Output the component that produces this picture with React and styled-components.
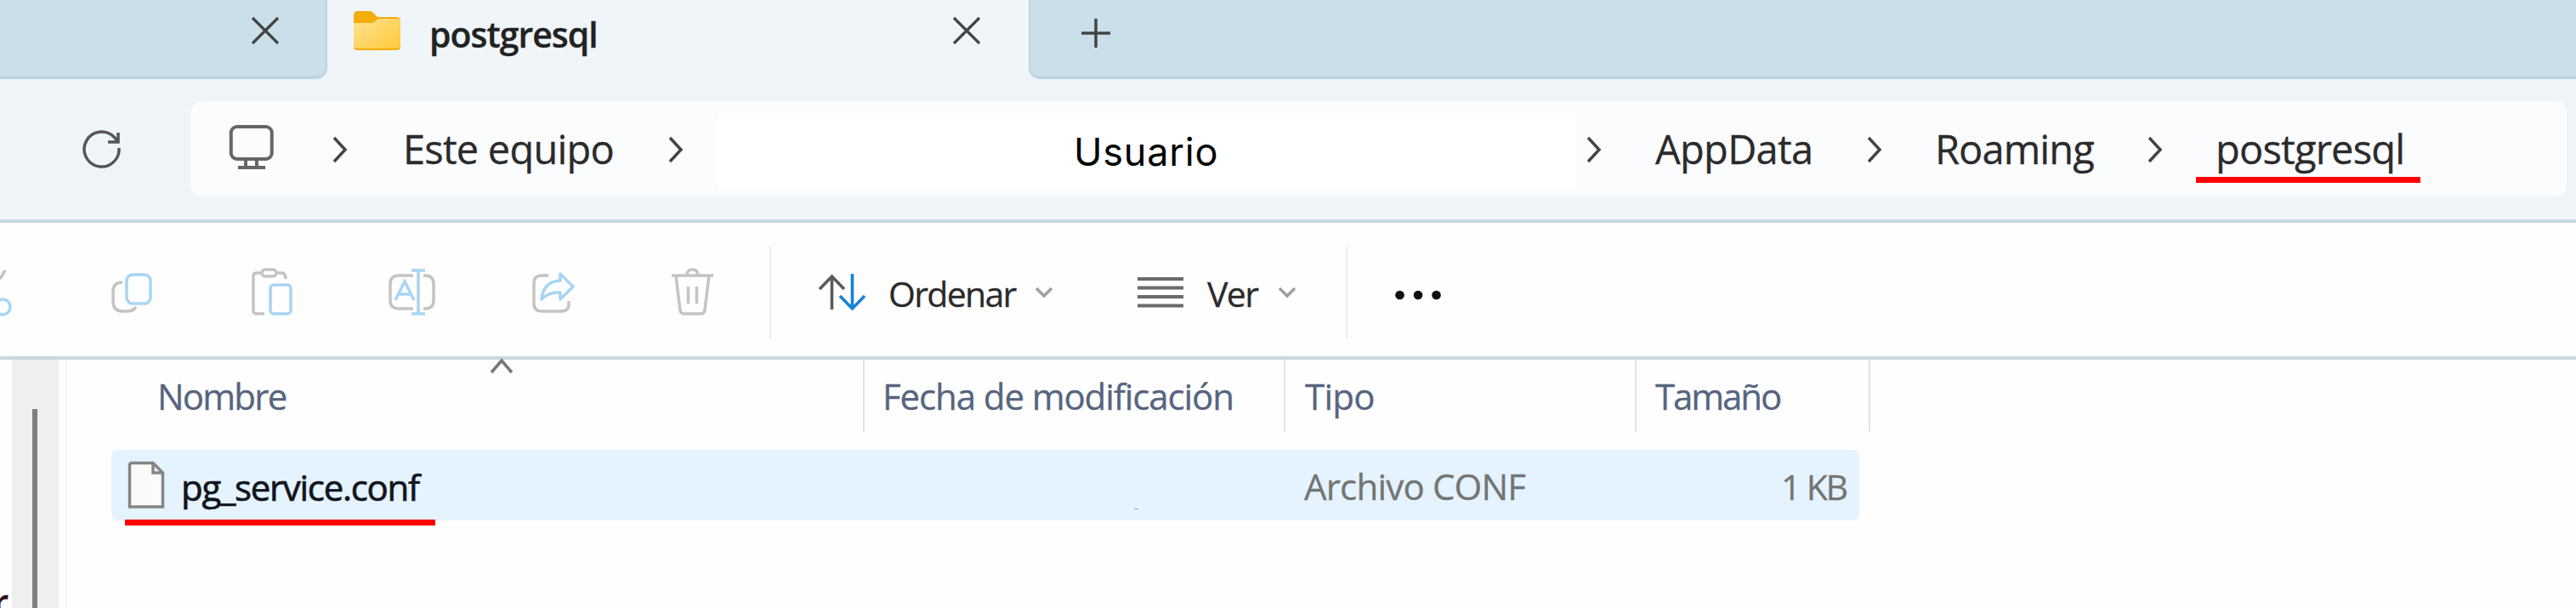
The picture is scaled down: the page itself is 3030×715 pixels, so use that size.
import React from "react";
import styled, { createGlobalStyle } from "styled-components";

const Global = createGlobalStyle`
  * { box-sizing: border-box; }
  body { margin: 0; background: #fefefe; overflow: hidden; }
`;

const Window = styled.main`
  width: 3030px;
  height: 715px;
  overflow: hidden;
  display: flex;
  flex-direction: column;
  background: #fefefe;
  font-family: "Open Sans", "Noto Sans", sans-serif;
  color: #1c1c1c;
`;

const Label = styled.span`
  flex: none;
  width: ${(p) => (p.$w ? `${p.$w}px` : "auto")};
  white-space: pre;
  font-family: ${(p) => p.$family || "inherit"};
  font-size: ${(p) => p.$size}px;
  line-height: 60px;
  font-weight: ${(p) => p.$weight || 480};
  -webkit-text-stroke: ${(p) => p.$heavy || 0.3}px currentColor;
  letter-spacing: ${(p) => p.$track || 0}px;
  color: ${(p) => p.$color || "#2b2b2b"};
  margin-left: ${(p) => p.$gap || 0}px;
  margin-top: ${(p) => p.$drop || 0}px;
`;

const Icon = styled.svg`
  flex: none;
  display: block;
  overflow: visible;
  fill: none;
  stroke: ${(p) => p.$color || "#444"};
  stroke-width: ${(p) => p.$stroke || 3.5};
  margin-left: ${(p) => p.$gap || 0}px;
  margin-top: ${(p) => p.$drop || 0}px;
`;

const TabStrip = styled.header`
  height: 93px;
  flex: none;
  display: flex;
  align-items: flex-start;
  background: #eff5f9;
`;

const InactiveTab = styled.div`
  width: 385px;
  height: 93px;
  background: #cbdfea;
  border-bottom: 4px solid #c0d4df;
  border-right: 2px solid #c0d4df;
  border-radius: 0 0 13px 0;
  display: flex;
`;

const ActiveTab = styled.div`
  width: 825px;
  height: 93px;
  display: flex;
`;

const StripRest = styled.div`
  flex: 1;
  height: 93px;
  background: #cbdfea;
  border-bottom: 4px solid #c0d4df;
  border-left: 2px solid #c0d4df;
  border-radius: 0 0 0 13px;
  display: flex;
`;

const NavRow = styled.nav`
  height: 169px;
  flex: none;
  display: flex;
  align-items: flex-start;
  padding-top: 26px;
  background: #eff4f8;
  border-bottom: 4px solid #c8d7e0;
`;

const AddressBar = styled.div`
  width: 2795px;
  height: 112px;
  margin-left: 82px;
  border-radius: 14px;
  background: #fbfcfe;
  display: flex;
  align-items: flex-start;
`;

const UserBox = styled.div`
  width: 1010px;
  height: 90px;
  margin: 15px 0 0 41px;
  background: #fff;
  display: flex;
`;

const CurrentFolder = styled.div`
  width: 264px;
  height: 96px;
  margin-left: 40px;
  border-bottom: 7px solid #fe0000;
  display: flex;
`;

const Toolbar = styled.div`
  height: 161px;
  flex: none;
  display: flex;
  align-items: flex-start;
  border-bottom: 4px solid #c8d7e0;
`;

const Separator = styled.div`
  width: 2px;
  height: 109px;
  margin: 27px 0 0 ${(p) => p.$gap}px;
  background: #ececec;
`;

const Body = styled.div`
  flex: 1;
  display: flex;
  min-height: 0;
`;

const SidePane = styled.aside`
  width: 14px;
  overflow: hidden;
  display: flex;
  align-items: flex-start;
`;

const ScrollTrack = styled.div`
  width: 55px;
  background: #efefef;
  display: flex;
  justify-content: center;
  padding-top: 58px;
`;

const ScrollThumb = styled.div`
  width: 6px;
  margin-left: -1px;
  background: #808080;
`;

const PaneEdge = styled.div`
  width: 2px;
  margin-left: 8px;
  background: #f7f7f7;
`;

const FileList = styled.section`
  width: 2122px;
  display: flex;
  flex-direction: column;
`;

const HeaderRow = styled.div`
  display: flex;
  height: 85px;
`;

const HeaderCell = styled.div`
  width: ${(p) => p.$w}px;
  border-right: 2px solid #e2e2e2;
  display: flex;
  align-items: flex-start;
`;

const FileRow = styled.div`
  width: 2056px;
  height: 83px;
  margin: 21px 0 0 52px;
  border-radius: 7px;
  background: #e4f3fe;
  display: flex;
  align-items: flex-start;
`;

const NameCell = styled.div`
  width: 365px;
  height: 89px;
  margin-left: 16px;
  border-bottom: 7px solid #fe0000;
  display: flex;
`;

const Speck = styled.i`
  width: 5px;
  height: 1px;
  margin: 69px 0 0 822px;
  background: #9aa5ad;
`;

const TypeCell = styled.div`
  width: 561px;
  margin-left: 195px;
  display: flex;
`;

const Close = ({ gap }) => (
  <Icon width="30" height="30" $gap={gap} $drop={21} $stroke={3.2}>
    <path d="M0 0 30 30M30 0 0 30" />
  </Icon>
);

const Crumb = ({ gap, drop = 43 }) => (
  <Icon width="16" height="28" $gap={gap} $drop={drop}>
    <path d="M1 0 14 14 1 28" />
  </Icon>
);

const Caret = ({ gap }) => (
  <Icon width="20" height="11" $gap={gap} $drop={76} $color="#a0a0a0">
    <path d="M1 1 10 10 19 1" />
  </Icon>
);

const GRAY = "#c4c4c4";
const BLUE = "#a8d5f4";
const HEAD = "#56657f";

export default function App() {
  return (
    <Window>
      <Global />
      <TabStrip>
        <InactiveTab>
          <Close gap={297} />
        </InactiveTab>
        <ActiveTab>
          <Icon width="55" height="47" $gap={31} $drop={13}>
            <defs>
              <linearGradient id="folder" x1="0" y1="0" x2="1" y2="1">
                <stop offset="0" stopColor="#ffe394" />
                <stop offset="1" stopColor="#ffc937" />
              </linearGradient>
            </defs>
            <g stroke="none">
              <path d="M0 5Q0 0 5 0H18Q22 0 25 4L28 7H50Q55 7 55 12V42Q55 46 50 46H5Q0 46 0 42Z" fill="#f2ad0c" />
              <path d="M0 14H21Q24 14 26 11Q28 9 31 9H51Q55 9 55 13V40Q55 44 50 44H5Q0 44 0 40Z" fill="url(#folder)" />
            </g>
          </Icon>
          <Label $size={41} $weight={600} $gap={34} $w={196} $track={-1} $drop={10} $color="#222">postgresql</Label>
          <Close gap={421} />
        </ActiveTab>
        <StripRest>
          <Icon width="34" height="34" $gap={60} $drop={22}>
            <path d="M17 0V34M0 17H34" />
          </Icon>
        </StripRest>
      </TabStrip>

      <NavRow>
        <Icon width="44" height="44" $gap={98} $drop={35} $color="#555">
          <path d="M42 20A20.5 20.5 0 1 1 36 7L41 13M41 2V13H29" />
        </Icon>
        <AddressBar>
          <Icon width="52" height="52" $gap={46} $drop={28} $color="#666" $stroke={4}>
            <rect x="1.75" y="2" width="48" height="38" rx="7" />
            <path d="M19 40V49M32 40V49M10 50H42" />
          </Icon>
          <Crumb gap={70} />
          <Label $size={47} $gap={66} $w={246} $track={-0.8} $drop={26}>Este equipo</Label>
          <Crumb gap={67} />
          <UserBox>
            <Label $family={'Inter, sans-serif'} $size={45} $weight={400} $heavy={0.01} $gap={419} $drop={15} $track={0.8} $color="#000">Usuario</Label>
          </UserBox>
          <Crumb gap={13} />
          <Label $size={47} $gap={64} $w={186} $track={-0.7} $drop={26}>AppData</Label>
          <Crumb gap={64} />
          <Label $size={47} $gap={63} $w={188} $track={-0.9} $drop={26}>Roaming</Label>
          <Crumb gap={63} />
          <CurrentFolder>
            <Label $size={47} $gap={23} $track={-0.8} $drop={26}>postgresql</Label>
          </CurrentFolder>
        </AddressBar>
      </NavRow>

      <Toolbar>
        <Icon width="14" height="55" $drop={54} $color={BLUE}>
          <path d="M6 2 0 12" stroke={GRAY} />
          <circle cx="3" cy="45" r="9" />
        </Icon>
        <Icon width="50" height="50" $gap={117} $drop={57} $color={BLUE}>
          <rect x="18" y="4" width="28" height="34" rx="7" />
          <path d="M13 13Q2 13 2 24V35Q2 47 13 47H18Q26 47 29 42" stroke={GRAY} />
        </Icon>
        <Icon width="50" height="56" $gap={115} $drop={54} $color={BLUE}>
          <rect x="22" y="19" width="24" height="34" rx="4" />
          <path d="M15 53H6Q2 53 2 49V9Q2 5 6 5H11M30 5H35Q40 5 40 12" stroke={GRAY} />
          <rect x="12" y="1" width="17" height="8" rx="4" stroke={GRAY} />
        </Icon>
        <Icon width="56" height="56" $gap={111} $drop={54} $color={BLUE}>
          <path d="M29 8H12Q2 8 2 18V37Q2 47 12 47H29M41 8H43Q53 8 53 18V37Q53 47 43 47H41" stroke={GRAY} />
          <path d="M35 2V53M27 2H43M27 53H43M8 37 19 15 30 37M12 30H26" />
        </Icon>
        <Icon width="50" height="50" $gap={113} $drop={57} $color={BLUE}>
          <path d="M19 5H11Q2 5 2 14V38Q2 47 11 47H34Q43 47 43 39V35" stroke={GRAY} />
          <path d="M33 3 48 18 33 33V25Q19 24 11 33Q13 12 33 11Z" strokeLinejoin="round" />
        </Icon>
        <Icon width="50" height="56" $gap={114} $drop={54} $color={GRAY}>
          <path d="M0 8H49M5 8 10 49Q11 53 15 53H34Q38 53 39 49L44 8M18 8Q18 1 24.500 1Q31 1 31 8M19.500 21V41M29.500 21V41" />
        </Icon>
        <Separator $gap={65} />
        <Icon width="55" height="44" $gap={56} $drop={60} $color="#5a5a5a" $stroke={3.6}>
          <path d="M15.500 42V3M1 18 15.500 3 30 18" />
          <path d="M39.500 0V41M25 26 39.500 41 54 26" stroke="#1583d8" />
        </Icon>
        <Label $size={41} $gap={27} $w={151} $track={-1.7} $drop={53}>Ordenar</Label>
        <Caret gap={22} />
        <Icon width="54" height="36" $gap={100} $drop={64} $color="#6a6a6a" $stroke={4}>
          <path d="M0 2H54M0 12.500H54M0 23H54M0 33.500H54" />
        </Icon>
        <Label $size={41} $gap={28} $w={60} $track={-1.6} $drop={53}>Ver</Label>
        <Caret gap={24} />
        <Separator $gap={59} />
        <Icon width="56" height="12" $gap={56} $drop={79}>
          <g fill="#111" stroke="none">
            <circle cx="5.500" cy="6" r="5.300" />
            <circle cx="27" cy="6" r="5.300" />
            <circle cx="48.500" cy="6" r="5.300" />
          </g>
        </Icon>
      </Toolbar>

      <Body>
        <SidePane>
          <Label $size={42} $weight={600} $gap={-8} $drop={254} $color="#301018">r</Label>
        </SidePane>
        <ScrollTrack>
          <ScrollThumb />
        </ScrollTrack>
        <PaneEdge />
        <FileList>
          <HeaderRow>
            <HeaderCell $w={938}>
              <Label $size={42} $gap={106} $w={153} $track={-1.8} $drop={13} $color={HEAD}>Nombre</Label>
              <Icon width="26" height="15" $gap={239} $drop={0} $color="#777">
                <path d="M1 15 13 1 25 15" />
              </Icon>
            </HeaderCell>
            <HeaderCell $w={495}>
              <Label $size={42} $gap={21} $track={-1.1} $drop={13} $color={HEAD}>Fecha de modificación</Label>
            </HeaderCell>
            <HeaderCell $w={413}>
              <Label $size={42} $gap={23} $track={-0.7} $drop={13} $color={HEAD}>Tipo</Label>
            </HeaderCell>
            <HeaderCell $w={275}>
              <Label $size={42} $gap={22} $track={-2.1} $drop={13} $color={HEAD}>Tamaño</Label>
            </HeaderCell>
          </HeaderRow>
          <FileRow>
            <NameCell>
              <Icon width="42" height="56" $gap={4} $drop={14} $color="#858585">
                <path d="M3 1.500H29L40.500 13V53H1.500V3Z" fill="#fafafa" />
                <path d="M29 1.500V13H40.500" />
              </Icon>
              <Label $size={42} $weight={500} $heavy={0.7} $gap={20} $track={-1.3} $drop={14} $color="#141420">pg_service.conf</Label>
            </NameCell>
            <Speck />
            <TypeCell>
              <Label $size={42} $track={-0.8} $drop={13} $color="#747474">Archivo CONF</Label>
            </TypeCell>
            <Label $size={41} $track={-2.2} $drop={13} $color="#747474">1 KB</Label>
          </FileRow>
        </FileList>
      </Body>
    </Window>
  );
}
